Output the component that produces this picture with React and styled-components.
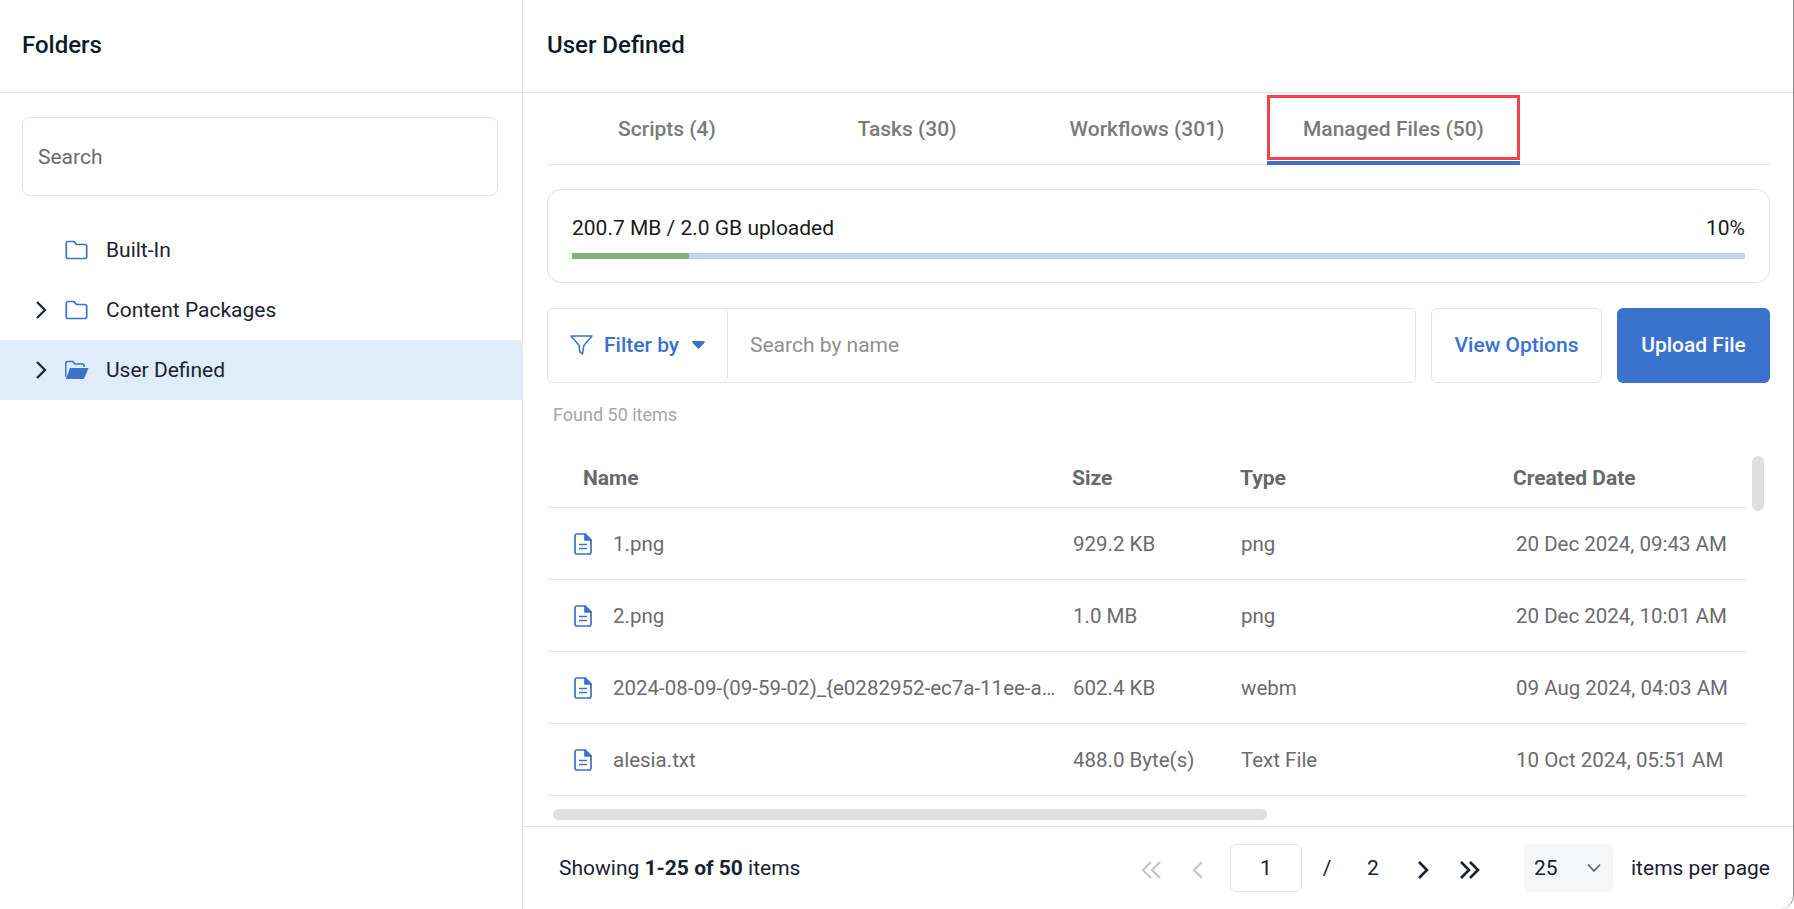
import React from "react";
import styled, { createGlobalStyle } from "styled-components";

const GlobalStyle = createGlobalStyle`
  html, body { margin: 0; padding: 0; height: 100%; background: #fff; overflow: hidden; }
  #root { height: 100%; }
  * { box-sizing: border-box; }
  body { font-family: Roboto, "Liberation Sans", sans-serif; }
`;

const BLUE = "#3a72cc";
const LINE = "#e3e3e3";

const Page = styled.div`
  display: grid;
  grid-template-columns: 523px 1fr;
  height: 909px;
  width: 1794px;
  border-right: 1px solid #8a8a8a;
  border-bottom-right-radius: 14px;
  overflow: hidden;
`;

const Sidebar = styled.aside`
  border-right: 1px solid ${LINE};
  display: flex;
  flex-direction: column;
`;

const Main = styled.main`
  display: flex;
  flex-direction: column;
  min-width: 0;
`;

const PanelTitle = styled.h2`
  margin: 0;
  height: 93px;
  flex: none;
  display: flex;
  align-items: center;
  padding: 0 ${(p) => p.$pad}px 2px;
  font-size: 24px;
  font-weight: 500;
  color: #0f1a2a;
  border-bottom: 1px solid ${LINE};
`;

const TreeSearch = styled.input`
  display: block;
  margin: 24px 24px 24px 22px;
  height: 79px;
  padding: 1px 15px 0;
  border: 1px solid ${LINE};
  border-radius: 8px;
  font: 400 21px Roboto, sans-serif;
  outline: none;
  &::placeholder { color: #6a6a70; opacity: 1; }
`;

const TreeRow = styled.div`
  display: flex;
  align-items: center;
  height: 60px;
  padding-left: 35px;
  font-size: 21px;
  color: #1b2230;
  background: ${(p) => (p.$active ? "#dfecfa" : "transparent")};
`;

const Toggle = styled.span`
  width: 30px;
  display: flex;
  align-items: center;
`;

const FolderSlot = styled.span`
  width: 41px;
  display: flex;
  align-items: center;
`;

const Content = styled.div`
  flex: 1;
  min-height: 0;
  padding: 0 23px 0 24px;
  display: flex;
  flex-direction: column;
`;

const Tabs = styled.div`
  display: flex;
  height: 72px;
  flex: none;
  border-bottom: 1px solid ${LINE};
`;

const Tab = styled.div`
  position: relative;
  min-width: 240px;
  padding: 0 36px;
  display: flex;
  align-items: center;
  justify-content: center;
  font-size: 21px;
  font-weight: 500;
  color: #7a7a7a;
  ${(p) => p.$active && `
    &::after {
      content: "";
      position: absolute;
      left: 0;
      right: 0;
      bottom: -1px;
      height: 4px;
      background: ${BLUE};
    }
    &::before {
      content: "";
      position: absolute;
      left: 0;
      right: 0;
      top: 2px;
      bottom: 4px;
      border: 3px solid #f4414a;
    }
  `}
`;

const UsageCard = styled.section`
  margin-top: 24px;
  height: 94px;
  flex: none;
  border: 1px solid ${LINE};
  border-radius: 14px;
  padding: 24px 24px 0;
`;

const UsageText = styled.div`
  display: flex;
  justify-content: space-between;
  font-size: 21px;
  line-height: 28px;
  color: #1a1a1a;
`;

const Progress = styled.div`
  margin-top: 11px;
  height: 6px;
  background: #c3d5ec;
`;

const ProgressFill = styled.div`
  height: 100%;
  background: #7ab571;
`;

const Toolbar = styled.div`
  margin-top: 25px;
  height: 75px;
  flex: none;
  display: flex;
  gap: 15px;
`;

const FilterGroup = styled.div`
  flex: 1;
  display: flex;
  border: 1px solid ${LINE};
  border-radius: 6px;
`;

const FilterButton = styled.button`
  width: 180px;
  flex: none;
  display: flex;
  align-items: center;
  padding: 0 0 2px 22px;
  background: #fff;
  border: 0;
  border-right: 1px solid ${LINE};
  border-radius: 6px;
  font: 500 21px Roboto, sans-serif;
  color: ${BLUE};
`;

const FilterLabel = styled.span`
  margin: 0 13px 0 11px;
`;

const NameSearch = styled.input`
  flex: 1;
  border: 0;
  outline: none;
  padding: 0 22px 2px;
  background: transparent;
  font: 400 21px Roboto, sans-serif;
  &::placeholder { color: #8f8f8f; opacity: 1; }
`;

const ViewButton = styled.button`
  width: 171px;
  flex: none;
  padding: 0 0 2px;
  background: #fff;
  border: 1px solid ${LINE};
  border-radius: 6px;
  font: 500 21px Roboto, sans-serif;
  color: ${BLUE};
`;

const UploadButton = styled.button`
  width: 153px;
  flex: none;
  padding: 0 0 2px;
  background: ${BLUE};
  border: 0;
  border-radius: 6px;
  font: 500 21px Roboto, sans-serif;
  color: #fff;
`;

const Found = styled.div`
  margin: 21px 0 0 6px;
  flex: none;
  font-size: 18px;
  line-height: 22px;
  color: #a6a6a6;
`;

const TableArea = styled.div`
  position: relative;
  flex: 1;
  min-height: 0;
  overflow: hidden;
`;

const TableRow = styled.div`
  display: grid;
  grid-template-columns: 525px 168px 273px 233px;
  width: 1199px;
  align-items: center;
  border-bottom: 1px solid ${LINE};
  height: ${(p) => (p.$head ? 82 : 72)}px;
  padding-top: ${(p) => (p.$head ? 23 : 0)}px;
  font-size: 20.5px;
  color: #6b6b70;
`;

const HeadCell = styled.div`
  font-size: 21px;
  font-weight: 700;
  color: #68686c;
  padding-left: ${(p) => p.$pad || 0}px;
`;

const NameCell = styled.div`
  display: flex;
  align-items: center;
  gap: 21px;
  padding: 0 18px 0 27px;
  min-width: 0;
`;

const FileName = styled.span`
  flex: 1;
  min-width: 0;
  overflow: hidden;
  white-space: nowrap;
`;

const Cell = styled.div`
  padding-left: ${(p) => p.$pad || 1}px;
  white-space: nowrap;
`;

const ScrollThumb = styled.div`
  position: absolute;
  background: #dedfe1;
  border-radius: 6px;
  ${(p) => p.$vertical
    ? "right: 6px; top: 30px; width: 12px; height: 55px;"
    : "left: 6px; bottom: 6px; width: 714px; height: 11px;"}
`;

const Footer = styled.footer`
  height: 83px;
  flex: none;
  border-top: 1px solid ${LINE};
  display: flex;
  align-items: center;
  padding: 0 23px 1px 36px;
  font-size: 21px;
  color: #1a2230;
`;

const Showing = styled.div`
  flex: 1;
  b { font-weight: 700; }
`;

const Pager = styled.div`
  display: flex;
  align-items: center;
`;

const PagerIcon = styled.span`
  display: flex;
  align-items: center;
  justify-content: center;
  width: ${(p) => p.$w}px;
  margin: 4px ${(p) => p.$mr || 0}px 0 ${(p) => p.$ml || 0}px;
`;

const PageBox = styled.div`
  width: 72px;
  height: 48px;
  display: flex;
  align-items: center;
  justify-content: center;
  border: 1px solid ${LINE};
  border-radius: 6px;
`;

const PagerText = styled.span`
  width: ${(p) => p.$w}px;
  text-align: center;
`;

const SizeSelect = styled.div`
  width: 89px;
  height: 48px;
  margin-left: 42px;
  padding: 0 11px 0 10px;
  display: flex;
  align-items: center;
  justify-content: space-between;
  background: #f5f6f8;
  border-radius: 6px;
`;

const PerPage = styled.span`
  margin-left: 18px;
`;

const FolderIcon = () => (
  <svg width="23" height="20" viewBox="0 0 23 20" fill="none" stroke={BLUE} strokeWidth="1.7" strokeLinejoin="round">
    <path d="M3 1.5h6l2.5 3H20a1.7 1.7 0 0 1 1.7 1.7v10.6a1.7 1.7 0 0 1-1.7 1.7H3a1.7 1.7 0 0 1-1.7-1.7V3.2A1.7 1.7 0 0 1 3 1.5z" />
  </svg>
);

const OpenFolderIcon = () => (
  <svg width="25" height="20" viewBox="1 0 25 20" fill="none">
    <path d="M1.6 17V3.2A1.7 1.7 0 0 1 3.3 1.5h5.5L11 4h7.5a1.5 1.5 0 0 1 1.5 1.5V7" stroke={BLUE} strokeWidth="1.7" strokeLinejoin="round" />
    <path d="M6 8h18.5l-4.2 10a1.4 1.4 0 0 1-1.3 1H1.8z" fill={BLUE} />
  </svg>
);

const Chevron = ({ color = "#1a2230", flip, double, w = 2.2 }) => (
  <svg width={double ? 22 : 12} height="20" viewBox={double ? "0 0 22 20" : "0 0 12 20"} fill="none" stroke={color} strokeWidth={w}
    style={flip ? { transform: "scaleX(-1)" } : undefined}>
    <path d="M2 2l8 8-8 8" />
    {double && <path d="M11 2l8 8-8 8" />}
  </svg>
);

const FilterIcon = () => (
  <svg width="23" height="20" viewBox="0 0 23 20" fill="none" stroke={BLUE} strokeWidth="1.5" strokeLinejoin="round">
    <path d="M1 1h21l-8 9.2-1.6 8.8-2.6-2.4-.8-6.4z" />
  </svg>
);

const Caret = () => (
  <svg width="13" height="8" viewBox="0 0 13 8">
    <path d="M1.2 0h10.6a1 1 0 0 1 .7 1.7L7.2 7.4a1 1 0 0 1-1.4 0L.5 1.7A1 1 0 0 1 1.2 0z" fill={BLUE} />
  </svg>
);

const FileIcon = () => (
  <svg width="18" height="22" viewBox="0 0 18 22" fill="none" stroke={BLUE} strokeWidth="1.7" strokeLinejoin="round">
    <path d="M3 1h8l6 6v12a2 2 0 0 1-2 2H3a2 2 0 0 1-2-2V3a2 2 0 0 1 2-2z" />
    <path d="M11 1l6 6h-6z" fill={BLUE} />
    <path d="M5 11.5h8M5 15.5h8" strokeWidth="1.6" />
  </svg>
);

const SelectChevron = () => (
  <svg width="16" height="10" viewBox="0 0 16 10" fill="none" stroke="#63666e" strokeWidth="1.8">
    <path d="M2 1.5l6 6.5 6-6.5" />
  </svg>
);

const files = [
  { name: "1.png", size: "929.2 KB", type: "png", date: "20 Dec 2024, 09:43 AM" },
  { name: "2.png", size: "1.0 MB", type: "png", date: "20 Dec 2024, 10:01 AM" },
  { name: "2024-08-09-(09-59-02)_{e0282952-ec7a-11ee-a…", size: "602.4 KB", type: "webm", date: "09 Aug 2024, 04:03 AM" },
  { name: "alesia.txt", size: "488.0 Byte(s)", type: "Text File", date: "10 Oct 2024, 05:51 AM" },
];

const tabs = ["Scripts (4)", "Tasks (30)", "Workflows (301)", "Managed Files (50)"];

export default function App() {
  return (
    <Page>
      <GlobalStyle />
      <Sidebar>
        <PanelTitle $pad={22}>Folders</PanelTitle>
        <TreeSearch placeholder="Search" />
        <TreeRow>
          <Toggle />
          <FolderSlot><FolderIcon /></FolderSlot>
          Built-In
        </TreeRow>
        <TreeRow>
          <Toggle><Chevron /></Toggle>
          <FolderSlot><FolderIcon /></FolderSlot>
          Content Packages
        </TreeRow>
        <TreeRow $active>
          <Toggle><Chevron /></Toggle>
          <FolderSlot><OpenFolderIcon /></FolderSlot>
          User Defined
        </TreeRow>
      </Sidebar>
      <Main>
        <PanelTitle $pad={24}>User Defined</PanelTitle>
        <Content>
          <Tabs>
            {tabs.map((t, i) => (
              <Tab key={t} $active={i === 3}>{t}</Tab>
            ))}
          </Tabs>
          <UsageCard>
            <UsageText>
              <span>200.7 MB / 2.0 GB uploaded</span>
              <span>10%</span>
            </UsageText>
            <Progress>
              <ProgressFill style={{ width: "10%" }} />
            </Progress>
          </UsageCard>
          <Toolbar>
            <FilterGroup>
              <FilterButton>
                <FilterIcon />
                <FilterLabel>Filter by</FilterLabel>
                <Caret />
              </FilterButton>
              <NameSearch placeholder="Search by name" />
            </FilterGroup>
            <ViewButton>View Options</ViewButton>
            <UploadButton>Upload File</UploadButton>
          </Toolbar>
          <Found>Found 50 items</Found>
          <TableArea>
            <TableRow $head>
              <HeadCell $pad={36}>Name</HeadCell>
              <HeadCell>Size</HeadCell>
              <HeadCell>Type</HeadCell>
              <HeadCell>Created Date</HeadCell>
            </TableRow>
            {files.map((f) => (
              <TableRow key={f.name}>
                <NameCell>
                  <FileIcon />
                  <FileName>{f.name}</FileName>
                </NameCell>
                <Cell>{f.size}</Cell>
                <Cell>{f.type}</Cell>
                <Cell $pad={3}>{f.date}</Cell>
              </TableRow>
            ))}
            <ScrollThumb $vertical />
            <ScrollThumb />
          </TableArea>
        </Content>
        <Footer>
          <Showing>Showing <b>1-25 of 50</b> items</Showing>
          <Pager>
            <PagerIcon $w={24} $mr={28}><Chevron flip double color="#c4c4c4" /></PagerIcon>
            <PagerIcon $w={14} $mr={25}><Chevron flip color="#c4c4c4" /></PagerIcon>
            <PageBox>1</PageBox>
            <PagerText $w={50}>/</PagerText>
            <PagerText $w={42}>2</PagerText>
            <PagerIcon $w={14} $ml={22} $mr={28}><Chevron w={2.6} /></PagerIcon>
            <PagerIcon $w={24}><Chevron double w={2.6} /></PagerIcon>
            <SizeSelect>
              25
              <SelectChevron />
            </SizeSelect>
            <PerPage>items per page</PerPage>
          </Pager>
        </Footer>
      </Main>
    </Page>
  );
}
